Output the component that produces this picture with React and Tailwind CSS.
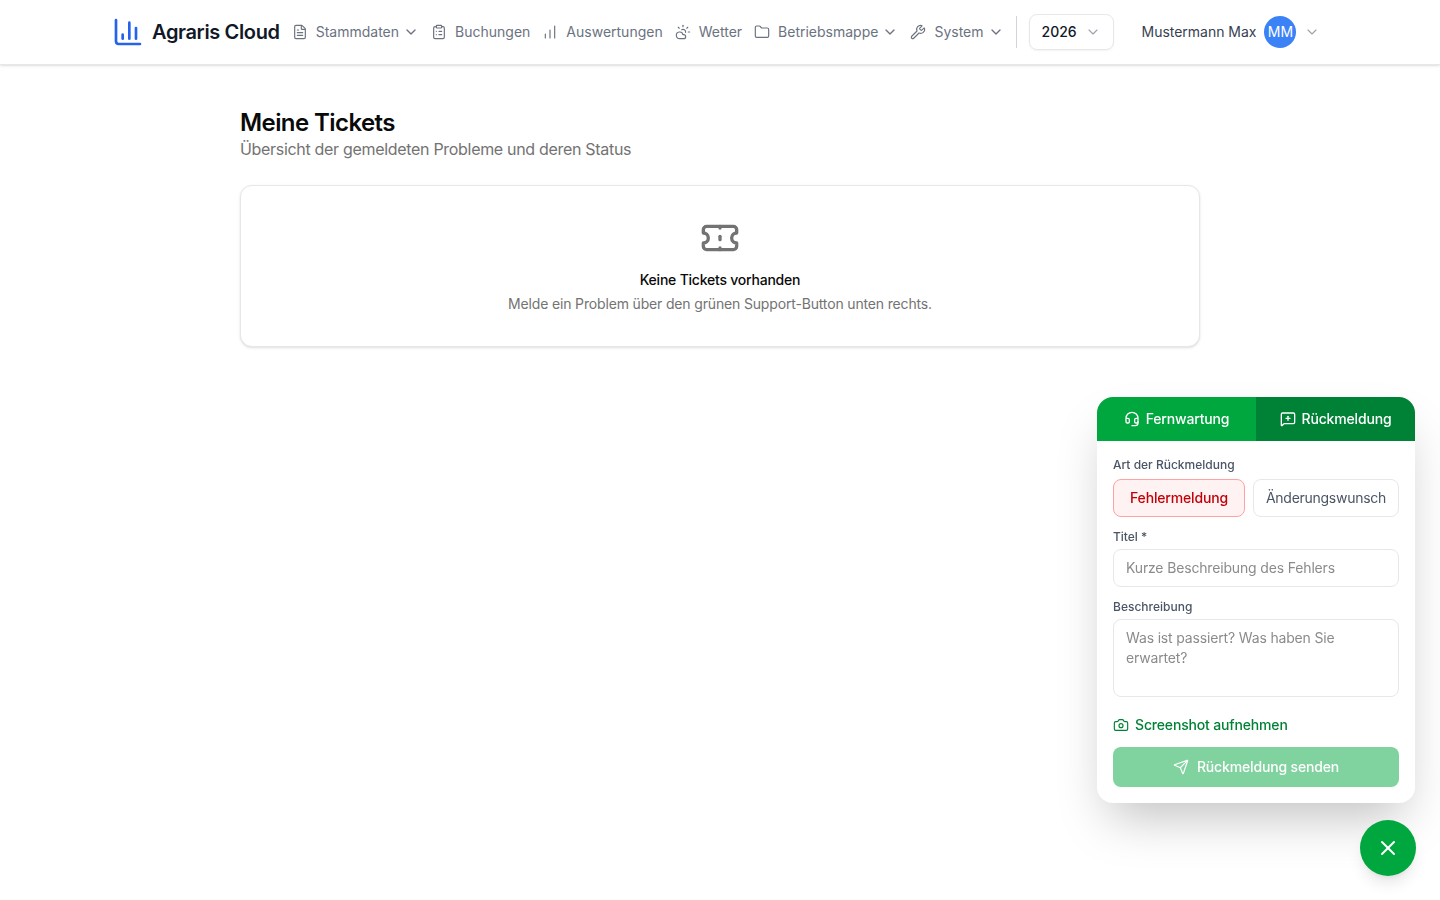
import {
  Camera,
  ChartColumn,
  ChartNoAxesColumnIncreasing,
  ChevronDown,
  ClipboardList,
  CloudSun,
  FileText,
  Folder,
  Headset,
  MessageSquarePlus,
  Send,
  Wrench,
  X,
} from "lucide-react";

const NAV_ITEMS = [
  { label: "Stammdaten", icon: FileText, menu: true },
  { label: "Buchungen", icon: ClipboardList },
  { label: "Auswertungen", icon: ChartNoAxesColumnIncreasing },
  { label: "Wetter", icon: CloudSun },
  { label: "Betriebsmappe", icon: Folder, menu: true },
  { label: "System", icon: Wrench, menu: true },
];

function NavItem({ item }) {
  const Icon = item.icon;
  return (
    <button type="button" className="flex items-center gap-2 text-sm text-[#6b7280] tracking-normal whitespace-nowrap">
      <Icon className="w-4 h-4" strokeWidth={1.75} />
      <span>{item.label}</span>
      {item.menu && <ChevronDown className="w-4 h-4 -ml-1" strokeWidth={2} />}
    </button>
  );
}

function Header() {
  return (
    <header className="h-[65px] bg-white border-b border-[#e5e7eb] shadow-sm flex items-center pl-[112px]">
      <a className="flex items-center gap-2 mr-3">
        <ChartColumn className="w-8 h-8 text-[#2563eb]" strokeWidth={2} />
        <span className="text-xl font-semibold text-[#111827] tracking-[-0.35px]">Agraris Cloud</span>
      </a>
      <nav className="flex items-center gap-3">
        {NAV_ITEMS.map((item) => (
          <NavItem key={item.label} item={item} />
        ))}
      </nav>
      <div className="w-px h-8 bg-[#d1d5db] mx-3" />
      <button
        type="button"
        className="w-[85px] h-9 border border-[#e5e7eb] rounded-lg shadow-xs flex items-center justify-between px-3 text-sm font-medium text-[#111827] tracking-normal"
      >
        2026
        <ChevronDown className="w-4 h-4 text-[#9ca3af]" strokeWidth={1.75} />
      </button>
      <button type="button" className="flex items-center ml-7 text-sm text-[#374151]">
        <span className="whitespace-nowrap tracking-[-0.02px]">Mustermann Max</span>
        <span className="w-8 h-8 ml-2 rounded-full bg-[#3b82f6] text-white flex items-center justify-center text-sm tracking-normal">
          MM
        </span>
        <ChevronDown className="w-4 h-4 ml-2 text-[#9ca3af]" strokeWidth={1.75} />
      </button>
    </header>
  );
}

function TicketIcon() {
  return (
    <svg className="w-10 h-10 text-[#737373]" viewBox="0 0 24 24" fill="none" stroke="currentColor" strokeWidth="2" strokeLinecap="round" strokeLinejoin="round">
      <path d="M2 9a3 3 0 0 1 0 6v2a2 2 0 0 0 2 2h16a2 2 0 0 0 2-2v-2a3 3 0 0 1 0-6V7a2 2 0 0 0-2-2H4a2 2 0 0 0-2 2Z" />
      <path d="M12 5v1" />
      <path d="M12 18v1" />
      <path d="M12 11v2" />
    </svg>
  );
}

function TicketsPage() {
  return (
    <main className="w-[960px] mx-auto pt-[42px]">
      <h1 className="text-2xl font-semibold text-[#0a0a0a] leading-8 tracking-[-0.58px]">Meine Tickets</h1>
      <p className="text-base text-[#737373] leading-6 -mt-[2px] tracking-[-0.31px]">
        Übersicht der gemeldeten Probleme und deren Status
      </p>
      <section className="mt-6 h-[162px] border border-[#e5e7eb] rounded-xl shadow-sm bg-white flex flex-col items-center pt-8">
        <TicketIcon />
        <h2 className="mt-[12px] text-sm font-medium text-[#0a0a0a] leading-5 tracking-[-0.22px]">Keine Tickets vorhanden</h2>
        <p className="mt-1 text-sm text-[#737373] leading-5">
          Melde ein Problem über den grünen Support-Button unten rechts.
        </p>
      </section>
    </main>
  );
}

function SupportPanel() {
  return (
    <div className="fixed right-[25px] bottom-[97px] w-[318px] bg-white rounded-2xl shadow-2xl overflow-hidden">
      <div className="flex h-11 text-sm font-medium text-white">
        <button type="button" className="flex-1 bg-[#00a63e] flex items-center justify-center gap-1.5">
          <Headset className="w-4 h-4" strokeWidth={2} />
          Fernwartung
        </button>
        <button type="button" className="flex-1 bg-[#008236] flex items-center justify-center gap-1.5">
          <MessageSquarePlus className="w-4 h-4" strokeWidth={2} />
          Rückmeldung
        </button>
      </div>
      <form className="p-4">
        <label className="block text-xs font-medium text-[#4a5565] leading-4 tracking-normal">Art der Rückmeldung</label>
        <div className="flex gap-2 mt-[6px]">
          <button type="button" className="w-[132px] h-[38px] rounded-lg border border-[#ffa2a2] bg-[#fef2f2] text-sm font-medium text-[#c10007]">
            Fehlermeldung
          </button>
          <button type="button" className="flex-1 h-[38px] rounded-lg border border-[#e5e7eb] text-sm text-[#4a5565] tracking-[-0.27px]">
            Änderungswunsch
          </button>
        </div>
        <label className="block mt-3 text-xs font-medium text-[#4a5565] leading-4 tracking-normal">Titel *</label>
        <input
          className="block w-full h-[38px] mt-1 px-3 pb-[2px] rounded-lg border border-[#e5e7eb] text-sm outline-none placeholder:text-[#8b8b8b]"
          placeholder="Kurze Beschreibung des Fehlers"
        />
        <label className="block mt-3 text-xs font-medium text-[#4a5565] leading-4 tracking-normal">Beschreibung</label>
        <textarea
          className="block w-full h-[78px] mt-1 px-3 py-2 rounded-lg border border-[#e5e7eb] text-sm leading-5 resize-none outline-none placeholder:text-[#8b8b8b]"
          placeholder="Was ist passiert? Was haben Sie erwartet?"
        />
        <button type="button" className="flex items-center gap-[6px] mt-[18px] text-sm font-medium text-[#008236] leading-5">
          <Camera className="w-4 h-4" strokeWidth={1.75} />
          Screenshot aufnehmen
        </button>
        <button type="button" className="w-full h-10 mt-3 rounded-lg bg-[#80d29f] text-white text-sm font-medium flex items-center justify-center gap-2">
          <Send className="w-4 h-4" strokeWidth={1.75} />
          Rückmeldung senden
        </button>
      </form>
    </div>
  );
}

export default function App() {
  return (
    <div className="min-h-screen bg-white font-[Inter,sans-serif] tracking-[-0.16px]">
      <Header />
      <TicketsPage />
      <SupportPanel />
      <button
        type="button"
        className="fixed right-6 bottom-6 w-14 h-14 rounded-full bg-[#00a63e] text-white shadow-lg flex items-center justify-center"
      >
        <X className="w-6 h-6" strokeWidth={2} />
      </button>
    </div>
  );
}
